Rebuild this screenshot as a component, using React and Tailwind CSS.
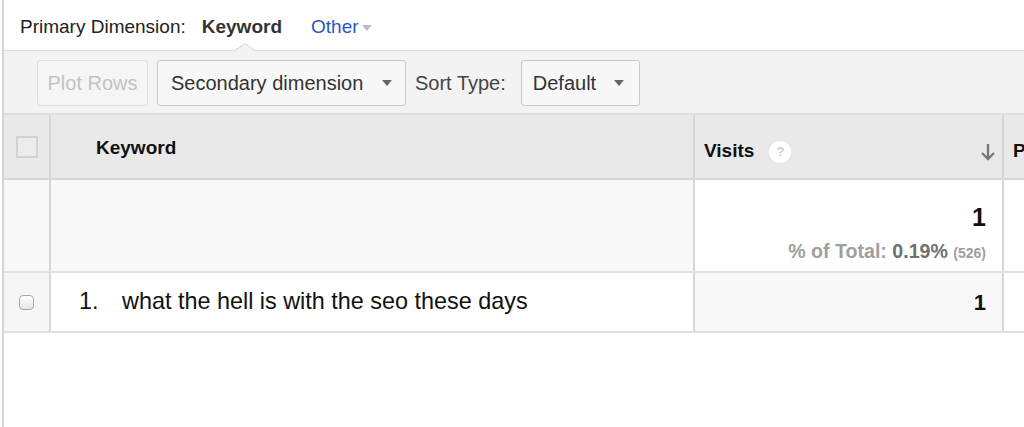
import React from "react";

function Caret({ className = "" }) {
  return (
    <svg width="10" height="6" viewBox="0 0 10 6" className={className}>
      <path d="M0 0 L10 0 L5 6 Z" fill="currentColor" />
    </svg>
  );
}

export default function App() {
  return (
    <div
      className="w-[1024px] h-[427px] overflow-hidden bg-white text-[#222]"
      style={{ fontFamily: '"Liberation Sans", Arial, sans-serif' }}
    >
      <div className="ml-[2px] h-full border-l-2 border-[#d4d4d4] flex flex-col">
        {/* Top bar */}
        <div className="relative h-[51px] shrink-0 border-b border-[#dcdcdc] flex items-center pl-[16px] text-[19px] pt-[4px]">
          <span className="text-[#222]">Primary Dimension:</span>
          <span className="ml-[16px] font-bold text-[#333]">Keyword</span>
          <span className="ml-[29px] text-[#2a56c6]">Other</span>
          <Caret className="ml-[3px] text-[#bbb] mt-[1px]" />
          <svg
            className="absolute left-[231px] bottom-[-1px]"
            width="20"
            height="8"
            viewBox="0 0 20 8"
          >
            <path d="M0 8 L10 0 L20 8 Z" fill="#f3f3f3" />
            <path d="M0 7.5 L10 0.5 L20 7.5" fill="none" stroke="#d6d6d6" strokeWidth="1" />
          </svg>
        </div>

        {/* Toolbar */}
        <div className="h-[64px] shrink-0 bg-[#f3f3f3] border-b-2 border-[#dedede] flex items-center pl-[33px] pt-[2px] text-[20px]">
          <div className="h-[46px] w-[111px] flex items-center justify-center rounded-[3px] border border-[#dedede] bg-[#f5f5f5] text-[#c3c3c3]">
            Plot Rows
          </div>
          <div className="ml-[9px] h-[46px] w-[249px] flex items-center pl-[13px] rounded-[3px] border border-[#c8c8c8] bg-[#f7f7f7] text-[#333]">
            <span>Secondary dimension</span>
            <Caret className="ml-[19px] text-[#666]" />
          </div>
          <span className="ml-[9px] text-[#444]">Sort Type:</span>
          <div className="ml-[15px] h-[46px] w-[119px] flex items-center pl-[11px] rounded-[3px] border border-[#c8c8c8] bg-[#f7f7f7] text-[#333]">
            <span>Default</span>
            <Caret className="ml-[18px] text-[#666]" />
          </div>
        </div>

        {/* Header row */}
        <div className="h-[65px] shrink-0 flex bg-[#e9e9e9] border-b-2 border-[#d6d6d6]">
          <div className="w-[47px] shrink-0 border-r-2 border-[#d6d6d6] flex items-center justify-center">
            <div className="w-[22px] h-[22px] border-2 border-[#d2d2d2] bg-[#ececec]" />
          </div>
          <div className="w-[642px] shrink-0 pl-[45px] pt-[19px] text-[19px] font-bold text-[#111]">
            Keyword
          </div>
          <div className="w-[309px] shrink-0 border-l-2 border-[#d6d6d6] flex items-center pl-[9px] pr-[6px] pt-[10px] text-[19px] font-bold text-[#111]">
            <span>Visits</span>
            <div className="ml-[15px] w-[22px] h-[22px] rounded-full bg-white flex items-center justify-center text-[13px] font-bold text-[#ccc]">
              ?
            </div>
            <svg className="ml-auto" width="16" height="18" viewBox="0 0 16 18">
              <path d="M8 1 L8 16 M2 10 L8 16 L14 10" fill="none" stroke="#777" strokeWidth="2.4" />
            </svg>
          </div>
          <div className="flex-1 border-l-2 border-[#d6d6d6] pl-[9px] flex items-center pt-[10px] text-[19px] font-bold text-[#111]">
            P
          </div>
        </div>

        {/* Summary row */}
        <div className="h-[93px] shrink-0 flex border-b-2 border-[#e0e0e0]">
          <div className="w-[47px] shrink-0 bg-[#f8f8f8] border-r-2 border-[#d6d6d6]" />
          <div className="w-[642px] shrink-0 bg-[#f8f8f8]" />
          <div className="w-[309px] shrink-0 border-l-2 border-[#d6d6d6] bg-white flex flex-col items-end pr-[16px] pt-[25px]">
            <span className="text-[25px] font-bold leading-none text-[#111]">1</span>
            <span className="mt-[12px] text-[19.6px] font-bold leading-none text-[#a0a0a0]">
              % of Total: <span className="text-[#707070]">0.19%</span>{" "}
              <span className="text-[14px] font-bold text-[#a0a0a0]">(526)</span>
            </span>
          </div>
          <div className="flex-1 border-l-2 border-[#d6d6d6] bg-white" />
        </div>

        {/* Data row */}
        <div className="h-[60px] shrink-0 flex border-b-2 border-[#e0e0e0]">
          <div className="w-[47px] shrink-0 bg-[#f6f6f6] border-r-2 border-[#d6d6d6] flex items-center justify-center">
            <div className="w-[15px] h-[15px] rounded-[4px] border border-[#a8a8a8] bg-gradient-to-b from-white to-[#e6e6e6]" />
          </div>
          <div className="w-[642px] shrink-0 bg-white flex items-center pl-[28px] text-[23.4px] text-[#111]">
            <span className="w-[43px]">1.</span>
            <span>what the hell is with the seo these days</span>
          </div>
          <div className="w-[309px] shrink-0 border-l-2 border-[#d6d6d6] bg-[#f8f8f8] flex items-center justify-end pr-[16px]">
            <span className="text-[22px] font-bold text-[#111]">1</span>
          </div>
          <div className="flex-1 border-l-2 border-[#d6d6d6] bg-white" />
        </div>

        <div className="flex-1 bg-white" />
      </div>
    </div>
  );
}
